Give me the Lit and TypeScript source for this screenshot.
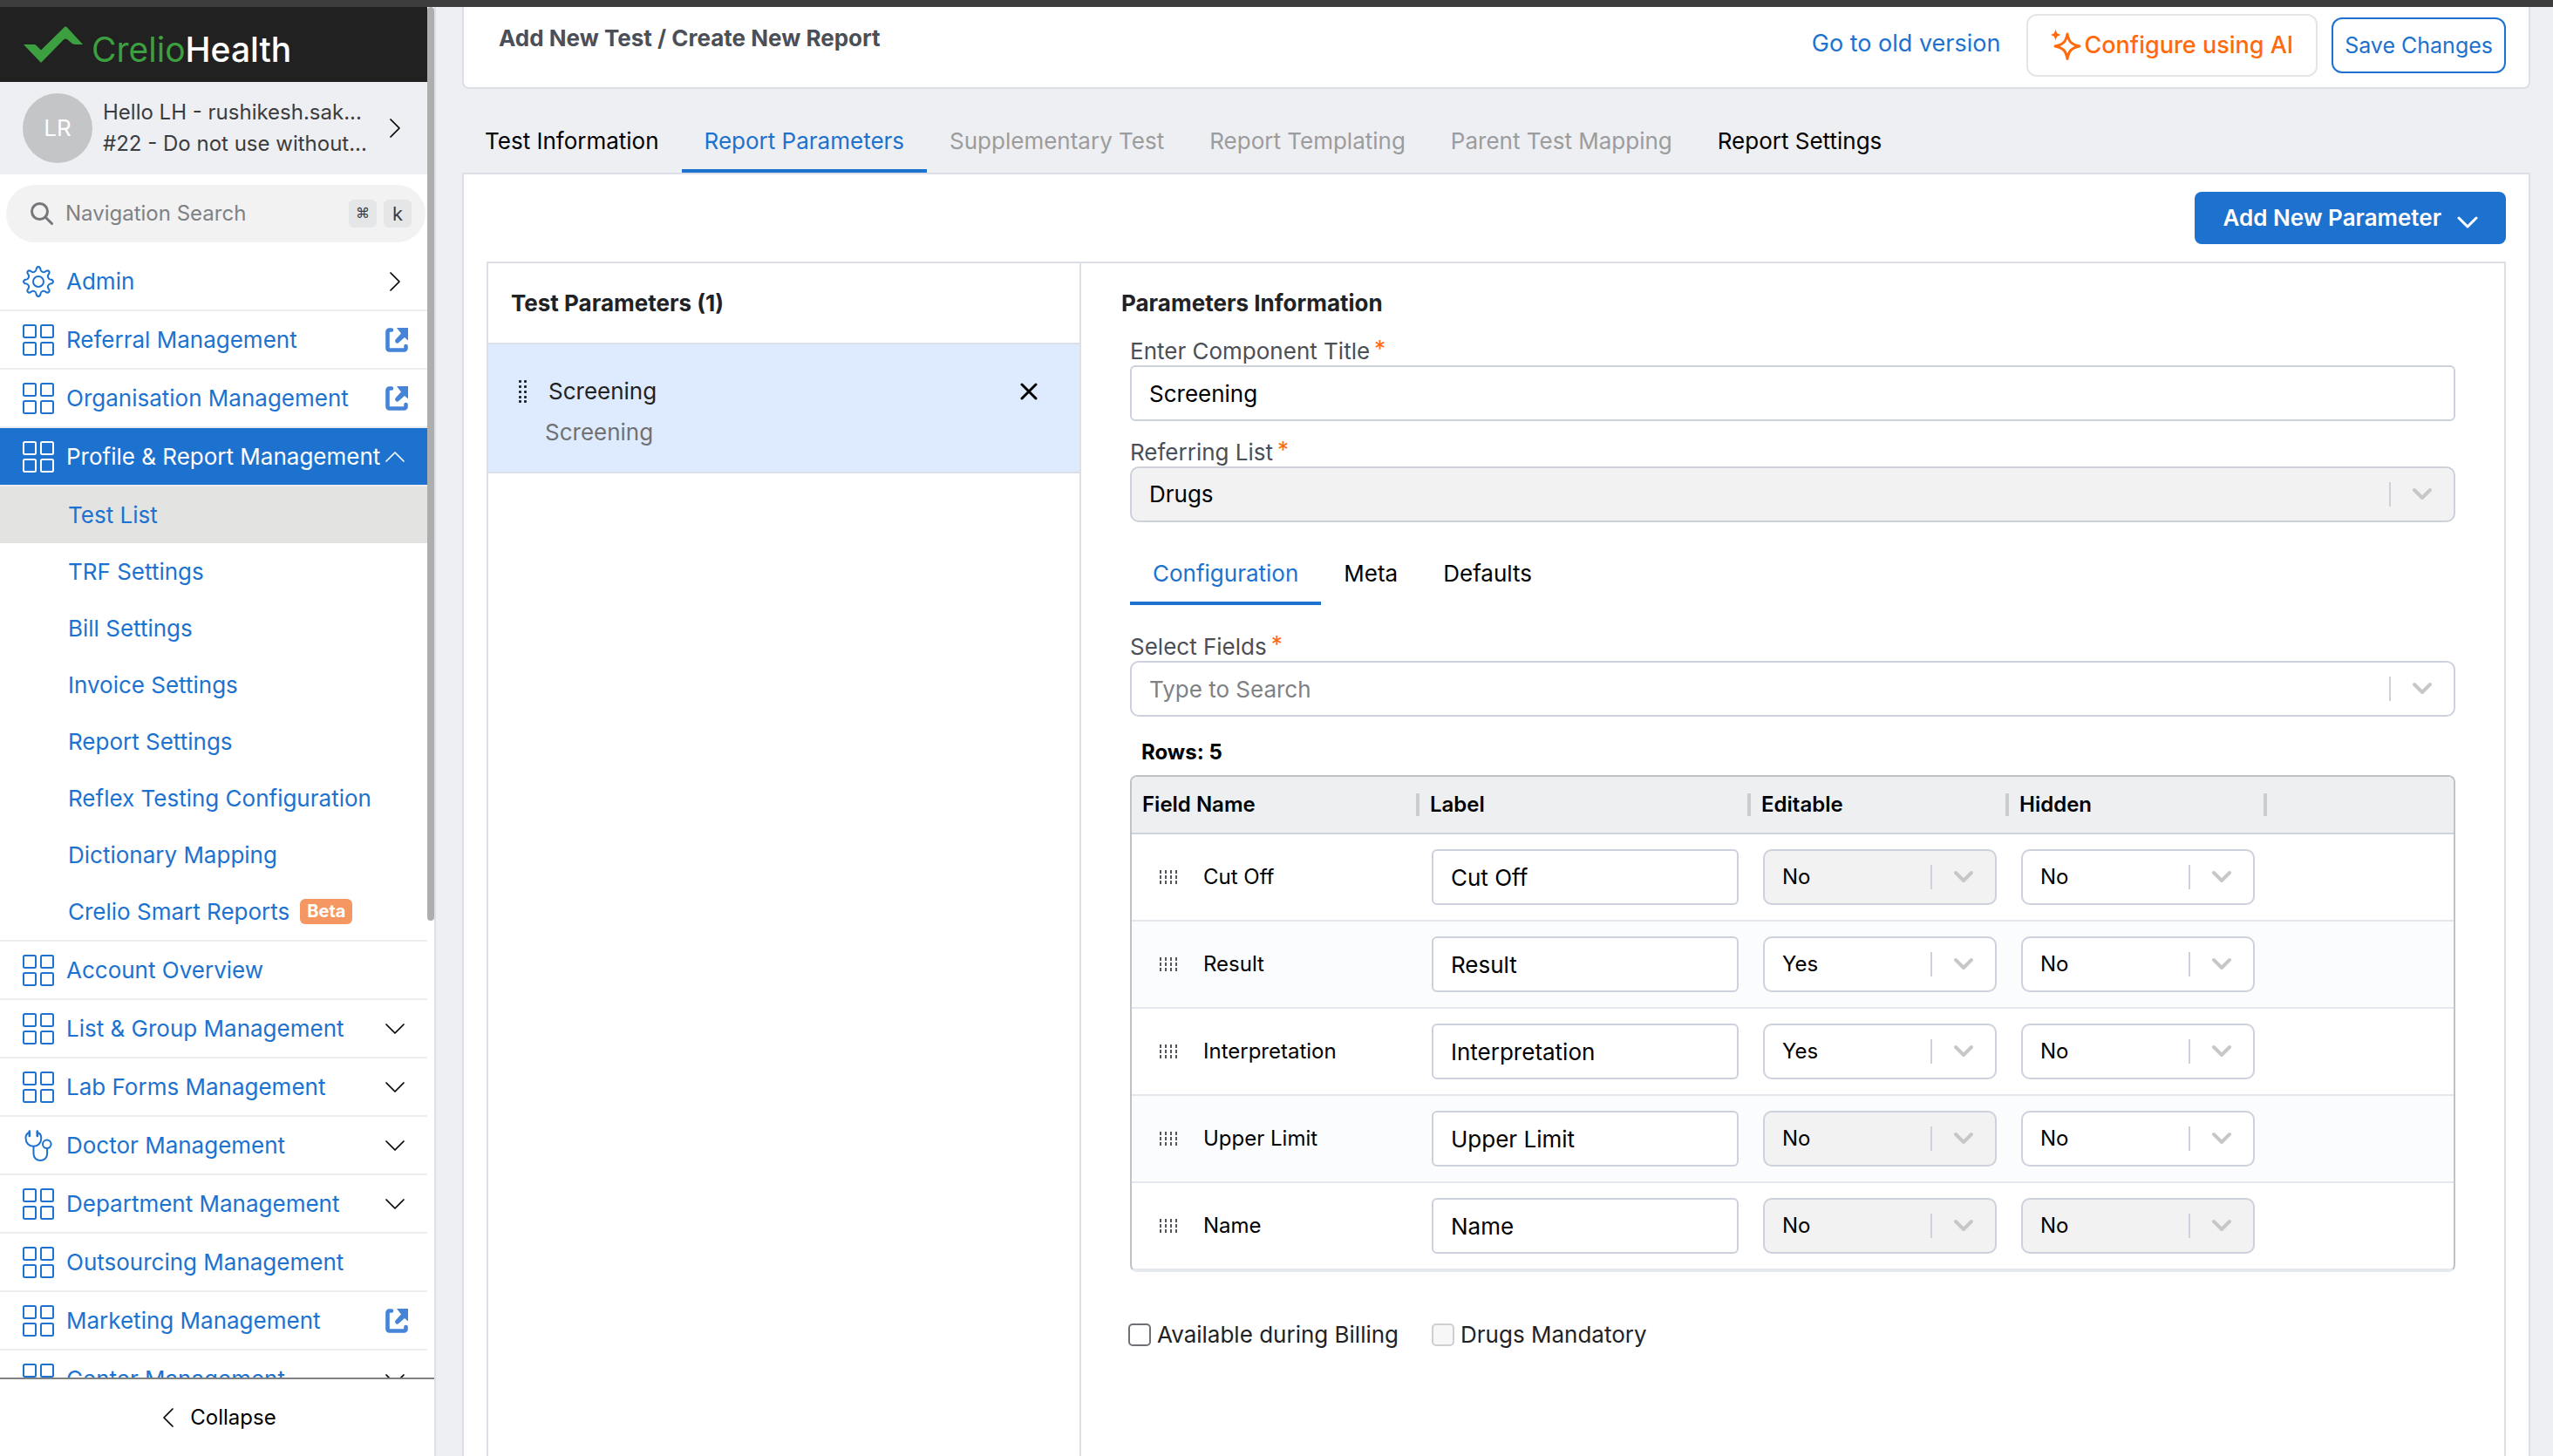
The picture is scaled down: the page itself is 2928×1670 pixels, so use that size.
import { LitElement, html, svg, css, nothing, TemplateResult } from "lit";
import { customElement, state } from "lit/decorators.js";
import { classMap } from "lit/directives/class-map.js";

/* ---------- icons ---------- */

const gridIcon = () => html`<svg class="icon" viewBox="0 0 36 36" fill="none" stroke="currentColor" stroke-width="2" aria-hidden="true">
  <rect x="1" y="1" width="14" height="14" rx="1.5" /><rect x="21" y="1" width="14" height="14" rx="1.5" />
  <rect x="1" y="21" width="14" height="14" rx="1.5" /><rect x="21" y="21" width="14" height="14" rx="1.5" />
</svg>`;

/* Eight rounded teeth, built from a radius that swings between rim and valley. */
const gearOutline = (() => {
  const parts: string[] = [];
  const point = (radius: number, degrees: number) => {
    const a = ((degrees - 90) * Math.PI) / 180;
    return `${(18 + radius * Math.cos(a)).toFixed(2)} ${(18 + radius * Math.sin(a)).toFixed(2)}`;
  };
  for (let i = 0; i < 8; i++) {
    const c = i * 45;
    parts.push(`${i === 0 ? "M" : "L"}${point(13.6, c - 11)}`);
    parts.push(`C${point(15.5, c - 9)} ${point(17, c - 7)} ${point(17, c)}`);
    parts.push(`C${point(17, c + 7)} ${point(15.5, c + 9)} ${point(13.6, c + 11)}`);
    parts.push(`C${point(11.8, c + 15)} ${point(11.8, c + 30)} ${point(13.6, c + 34)}`);
  }
  return parts.join("") + "Z";
})();

const gearIcon = () => html`<svg class="icon" viewBox="0 0 36 36" fill="none" stroke="currentColor" stroke-width="2" stroke-linejoin="round" aria-hidden="true">
  <path d=${gearOutline} /><circle cx="18" cy="18" r="6" />
</svg>`;

const doctorIcon = () => html`<svg class="icon" viewBox="0 0 36 36" fill="none" stroke="currentColor" stroke-width="2" stroke-linecap="round" aria-hidden="true">
  <path d="M7.5 3C4.5 4 3.5 6 3.5 9.500C3.500 15 7.500 18.800 12.400 18.800S21.300 15 21.300 9.500C21.300 6 20.300 4 17 3" />
  <path d="M7.800 1.500v5.500M16.800 1.500v5.500" stroke-width="2.600" />
  <path d="M12.500 19v8.500c0 4.500 3.500 7.500 7.800 7.500s7.800-3 7.800-7.500v-6" />
  <circle cx="27.800" cy="16.300" r="4.800" />
</svg>`;

const chevron = (dir: "right" | "left" | "up" | "down") => {
  const d = {
    right: "M7 2l10 10-10 10",
    left: "M17 2L7 12l10 10",
    up: "M2 17L12 7l10 10",
    down: "M2 7l10 10L22 7",
  }[dir];
  return html`<svg class="chevron" viewBox="0 0 24 24" fill="none" stroke="currentColor" stroke-width="1.7" stroke-linecap="round" stroke-linejoin="round" aria-hidden="true">
    <path d=${d} />
  </svg>`;
};

const externalIcon = () => html`<svg class="external" viewBox="0 0 26 28" aria-hidden="true">
  <path d="M7 2.500H4.500a2 2 0 0 0-2 2v19a2 2 0 0 0 2 2h17a2 2 0 0 0 2-2V21" fill="none" stroke="currentColor" stroke-width="4.600" stroke-linecap="round" />
  <path d="M13 0H26V14.500L22 11L15.500 16.800A2.200 2.200 0 0 1 11.800 13.300L18 6.500Z" fill="currentColor" />
</svg>`;

const gripDots = () => html`<svg class="grip-dots" viewBox="0 0 10 26" fill="currentColor" aria-hidden="true">
  ${[0, 6, 12, 18, 23].map((y) => svg`<rect x="0" y=${y} width="3" height="3" rx="1" /><rect x="6" y=${y} width="3" height="3" rx="1" />`)}
</svg>`;

const gripDashes = () => html`<svg class="grip-dashes" viewBox="0 0 20 16" fill="currentColor" aria-hidden="true">
  ${[0, 6, 12].map((y) => [0, 6, 12, 18].map((x) => svg`<rect x=${x} y=${y} width="2" height="4" />`))}
</svg>`;

const selectArrow = () => html`<svg class="select-arrow" viewBox="0 0 24 16" fill="none" stroke="currentColor" stroke-width="4" stroke-linecap="round" stroke-linejoin="round" aria-hidden="true">
  <path d="M3 3l9 9 9-9" />
</svg>`;

/* ---------- sidebar ---------- */

interface NavItem {
  label: string;
  icon?: "grid" | "gear" | "doctor";
  end?: "right" | "up" | "down" | "external";
  children?: { label: string; badge?: string; current?: boolean }[];
}

const NAV: NavItem[] = [
  { label: "Admin", icon: "gear", end: "right" },
  { label: "Referral Management", end: "external" },
  { label: "Organisation Management", end: "external" },
  {
    label: "Profile & Report Management",
    end: "up",
    children: [
      { label: "Test List", current: true },
      { label: "TRF Settings" },
      { label: "Bill Settings" },
      { label: "Invoice Settings" },
      { label: "Report Settings" },
      { label: "Reflex Testing Configuration" },
      { label: "Dictionary Mapping" },
      { label: "Crelio Smart Reports", badge: "Beta" },
    ],
  },
  { label: "Account Overview" },
  { label: "List & Group Management", end: "down" },
  { label: "Lab Forms Management", end: "down" },
  { label: "Doctor Management", icon: "doctor", end: "down" },
  { label: "Department Management", end: "down" },
  { label: "Outsourcing Management" },
  { label: "Marketing Management", end: "external" },
  { label: "Center Management", end: "down" },
];

@customElement("side-nav")
export class SideNav extends LitElement {
  static styles = css`
    :host {
      display: grid;
      grid-template-rows: minmax(0, 1fr) auto;
      min-height: 0;
      box-sizing: border-box;
      background: #fff;
      border-right: 2px solid #dcdfe5;
      color: #1d72cf;
      font-size: 26px;
      line-height: 36px;
    }
    * { box-sizing: border-box; }
    a { color: inherit; text-decoration: none; }
    button { font: inherit; color: inherit; background: none; border: 0; padding: 0; text-align: left; cursor: pointer; }
    ul { list-style: none; margin: 0; padding: 0; }
    svg { display: block; flex: none; }

    .scroller { display: grid; grid-template-columns: minmax(0, 1fr) 8px; min-height: 0; overflow: hidden; }
    .content { min-height: 0; overflow: hidden; }
    .thumb { height: calc(100% * 2 / 3); background: #adaeae; border-radius: 4px; }

    .brand { display: flex; align-items: center; gap: 10px; height: 86px; padding: 0 27px; background: #212121; color: #fff; }
    .brand-mark { width: 68px; height: 42px; }
    .brand-name { font-size: 39px; line-height: 44px; font-weight: 500; padding-top: 12px; }
    .brand-name .lead { color: #3c9f40; font-weight: 400; }

    .account { display: flex; align-items: center; width: 100%; height: 106px; padding: 0 22px 0 26px; background: #eeeff2; color: #3b3c40; }
    .avatar { display: grid; place-items: center; flex: none; width: 80px; height: 80px; border-radius: 50%; background: #c4c5c7; color: #fff; }
    .account-text { flex: 1; padding-left: 12px; white-space: nowrap; font-size: 24px; }
    .account-line { display: block; }
    .account .chevron { color: #000; }

    .search { display: flex; align-items: center; gap: 14px; height: 66px; margin: 12px 2px 12px 7px; padding: 0 16px 0 28px; border-radius: 33px; background: #f2f2f2; font-size: 24px; }
    .search-icon { width: 26px; height: 26px; color: #76777a; }
    .search-input { flex: 1; min-width: 0; border: 0; background: none; padding: 0; font: inherit; color: #333; outline: 0; }
    .search-input::placeholder { color: #808184; opacity: 1; }
    .keys { display: flex; gap: 8px; }
    kbd { display: grid; place-items: center; width: 32px; height: 32px; border-radius: 6px; background: #e5e6e8; color: #3b3c40; font: inherit; font-size: 22px; line-height: 28px; }
    .cmd { font-family: "DejaVu Sans", sans-serif; font-size: 16px; }

    .row { display: flex; align-items: center; gap: 14px; width: 100%; height: 65px; padding: 0 22px 0 26px; white-space: nowrap; }
    .item { border-bottom: 2px solid #eeeeef; }
    .item.open { border-bottom: 0; }
    .item.open .row { background: #1d72cf; color: #fff; }
    .item.open .row .chevron { color: #fff; }
    .row-label { flex: 1; }
    .icon { width: 36px; height: 36px; }
    .chevron { width: 24px; height: 24px; color: #000; margin-right: 3px; }
    .open .chevron { margin-left: -14px; }
    .external { width: 26px; height: 28px; color: #4584d6; }

    .sub { border-top: 2px solid #eeeeef; border-bottom: 2px solid #eeeeef; }
    .sub-link { display: flex; align-items: center; gap: 12px; height: 65px; padding-left: 78px; white-space: nowrap; }
    .sub-link.current { background: #e3e3e2; }
    .badge { padding: 0 8px; border-radius: 6px; background: #f59762; color: #fff; font-size: 20px; line-height: 29px; font-weight: 700; }

    .collapse { display: flex; align-items: center; justify-content: center; gap: 10px; height: 90px; border-top: 2px solid #808183; color: #000; font-size: 24px; }
  `;

  private icon(kind: NavItem["icon"]) {
    if (kind === "gear") return gearIcon();
    if (kind === "doctor") return doctorIcon();
    return gridIcon();
  }

  private row(item: NavItem): TemplateResult {
    const inner = html`${this.icon(item.icon)}<span class="row-label">${item.label}</span>
      ${item.end === "external" ? externalIcon() : item.end ? chevron(item.end) : nothing}`;
    return item.end && item.end !== "external"
      ? html`<button class="row" type="button" aria-expanded=${item.end === "up"}>${inner}</button>`
      : html`<a class="row" href="#">${inner}</a>`;
  }

  render() {
    return html`
      <div class="scroller">
        <div class="content">
          <div class="brand">
            <svg class="brand-mark" viewBox="0 0 68 42" fill="#3c9f40" aria-hidden="true">
              <path d="M0 21H12C13 21 14 21.500 14.500 22L20 27.500L46.500 1.500Q48 -0.500 50 1.500L68 21H60C57 21 55.500 20 54 18.500L50.500 15.500Q48 13.500 46 15.500L20 42Z" />
            </svg>
            <span class="brand-name"><span class="lead">Crelio</span>Health</span>
          </div>
          <button class="account" type="button">
            <span class="avatar">LR</span>
            <span class="account-text">
              <span class="account-line">Hello LH - rushikesh.sak...</span>
              <span class="account-line">#22 - Do not use without...</span>
            </span>
            ${chevron("right")}
          </button>
          <div class="search">
            <svg class="search-icon" viewBox="0 0 26 26" fill="none" stroke="currentColor" stroke-width="3" stroke-linecap="round" aria-hidden="true">
              <circle cx="10.500" cy="10.500" r="9" /><path d="M17.500 17.500L24.500 24.500" />
            </svg>
            <input class="search-input" type="text" placeholder="Navigation Search" aria-label="Navigation Search" />
            <span class="keys"><kbd class="cmd">⌘</kbd><kbd>k</kbd></span>
          </div>
          <nav>
            <ul>
              ${NAV.map(
                (item) => html`<li class=${classMap({ item: true, open: !!item.children })}>
                  ${this.row(item)}
                  ${item.children
                    ? html`<ul class="sub">
                        ${item.children.map(
                          (child) => html`<li>
                            <a class=${classMap({ "sub-link": true, current: !!child.current })} href="#">
                              ${child.label}${child.badge ? html`<span class="badge">${child.badge}</span>` : nothing}
                            </a>
                          </li>`
                        )}
                      </ul>`
                    : nothing}
                </li>`
              )}
            </ul>
          </nav>
        </div>
        <div class="thumb"></div>
      </div>
      <button class="collapse" type="button">${chevron("left")}Collapse</button>
    `;
  }
}

/* ---------- page ---------- */

const TABS = [
  { label: "Test Information" },
  { label: "Report Parameters" },
  { label: "Supplementary Test", disabled: true },
  { label: "Report Templating", disabled: true },
  { label: "Parent Test Mapping", disabled: true },
  { label: "Report Settings" },
];

const SUB_TABS = ["Configuration", "Meta", "Defaults"];

interface FieldRow {
  name: string;
  editable: "Yes" | "No";
  editableLocked: boolean;
  hidden: "Yes" | "No";
  hiddenLocked: boolean;
}

const FIELDS: FieldRow[] = [
  { name: "Cut Off", editable: "No", editableLocked: true, hidden: "No", hiddenLocked: false },
  { name: "Result", editable: "Yes", editableLocked: false, hidden: "No", hiddenLocked: false },
  { name: "Interpretation", editable: "Yes", editableLocked: false, hidden: "No", hiddenLocked: false },
  { name: "Upper Limit", editable: "No", editableLocked: true, hidden: "No", hiddenLocked: false },
  { name: "Name", editable: "No", editableLocked: true, hidden: "No", hiddenLocked: true },
];

@customElement("app-root")
export class AppRoot extends LitElement {
  static styles = css`
    :host {
      display: grid;
      grid-template-rows: 8px minmax(0, 1fr);
      height: 100vh;
      overflow: hidden;
      background: #eeeff2;
      color: #000;
      font-family: Inter, "Liberation Sans", sans-serif;
      font-size: 26px;
      line-height: 32px;
    }
    * { box-sizing: border-box; }
    a { color: inherit; text-decoration: none; }
    button { font: inherit; color: inherit; background: none; border: 0; padding: 0; cursor: pointer; white-space: nowrap; }
    h1, h2 { margin: 0; font-size: 26px; line-height: 36px; font-weight: 700; }
    svg { display: block; flex: none; }

    .top-strip { background: #3d3d3d; }
    .shell { display: grid; grid-template-columns: 500px minmax(0, 1fr); min-height: 0; }
    .main { display: flex; flex-direction: column; min-height: 0; padding: 0 26px 0 30px; overflow: hidden; }

    .page-head { display: flex; align-items: center; justify-content: space-between; flex: none; padding: 8px 26px 12px 40px; background: #fff; border: 2px solid #dcdfe5; border-top: 0; border-radius: 0 0 8px 8px; }
    .page-title { align-self: flex-start; padding-top: 10px; color: #4b4f57; }
    .actions { display: flex; align-items: center; gap: 16px; }
    .old-link { margin-right: 14px; padding-bottom: 4px; color: #1d72cf; font-size: 27px; }
    .ai-button { display: flex; align-items: center; gap: 2px; height: 72px; padding: 0 26px; border: 2px solid #e5e5e6; border-radius: 12px; color: #ff6a0d; font-size: 27px; font-weight: 500; }
    .spark { width: 36px; height: 36px; }
    .save-button { height: 64px; padding: 0 13px; border: 2px solid #1d72cf; border-radius: 12px; color: #1d72cf; font-size: 25px; }

    .tabs { display: flex; flex: none; margin-top: 28px; }
    .tab { padding: 16px 26px; border-bottom: 4px solid transparent; }
    .tab.active { color: #1d72cf; border-bottom-color: #1d72cf; }
    .tab:disabled { color: #9b9c9e; cursor: default; }

    .card { display: flex; flex-direction: column; flex: 1; min-height: 0; padding: 20px 26px 0; background: #fff; border: 2px solid #dcdfe5; border-bottom: 0; }
    .add-button { display: flex; align-items: center; align-self: flex-end; gap: 18px; height: 60px; margin-bottom: 20px; padding: 0 32px; border-radius: 8px; background: #1d72cf; color: #fff; font-weight: 600; }
    .add-button .chevron { width: 24px; height: 24px; margin-top: 10px; stroke-width: 3; }

    .panel { display: grid; grid-template-columns: minmax(0, 5fr) minmax(0, 12fr); flex: 1; min-height: 0; border: 2px solid #dcdfe5; border-bottom: 0; }
    .list { border-right: 2px solid #dcdfe5; color: #212225; }
    .list-title { display: flex; align-items: center; height: 93px; padding: 0 26px; border-bottom: 2px solid #dcdfe5; }
    .param { display: grid; grid-template-columns: auto minmax(0, 1fr) auto; align-items: center; row-gap: 11px; height: 148px; padding: 36px 48px 27px 35px; background: #deebfe; border-bottom: 2px solid #dcdfe5; line-height: 36px; }
    .grip-dots { width: 10px; height: 26px; }
    .param-name { padding-left: 24px; }
    .param-sub { grid-column: 1 / -1; padding-left: 30px; color: #707174; }
    .close { color: #000; }
    .close-icon { width: 20px; height: 20px; }

    .detail { padding: 28px 56px 0 46px; }
    .detail-title { color: #212225; }
    .form { padding: 21px 0 0 10px; }
    .field { margin-bottom: 20px; }
    .label { display: flex; gap: 5px; color: #4b4f57; }
    .req { color: #ff6a0d; line-height: 26px; }
    .text-input { display: block; width: 100%; height: 64px; padding: 0 20px; border: 2px solid #ccd1dc; border-radius: 6px; background: #fff; color: #000; font: inherit; outline: 0; }
    .text-input::placeholder { color: #808184; opacity: 1; }
    .select { position: relative; }
    .control { appearance: none; display: block; width: 100%; height: 64px; margin: 0; padding: 0 80px 0 20px; border: 2px solid #ccd1dc; border-radius: 10px; background: #fff; color: #000; font: inherit; opacity: 1; outline: 0; }
    .control::placeholder { color: #808184; opacity: 1; }
    .control:disabled { background: #f2f2f2; }
    .indicator { position: absolute; top: 18px; right: 26px; display: flex; align-items: center; height: 28px; padding-left: 24px; border-left: 2px solid #ccd1dc; color: #c6c7c9; pointer-events: none; }
    .select-arrow { width: 24px; height: 16px; }

    .sub-tabs { display: flex; margin: 27px 0 32px; }

    .row-count { padding: 5px 13px 10px; font-size: 24px; font-weight: 700; }
    .table-wrap { border: 2px solid #c0c2c6; border-bottom-color: #e4e7ec; border-radius: 8px; overflow: hidden; }
    .table { width: 100%; border-collapse: separate; border-spacing: 0; table-layout: fixed; font-size: 24px; }
    .col-name { width: 330px; }
    .col-label { width: 380px; }
    .col-flag { width: 296px; }
    .table th { height: 66px; padding: 0; background: #eeeff1; border-bottom: 2px solid #cdd3dc; text-align: left; font-weight: 600; }
    .head { display: block; padding-left: 12px; border-right: 4px solid #cbccce; line-height: 26px; }
    .table td { height: 100px; padding: 0 14px; border-bottom: 2px solid #e4e7ee; }
    .table tbody tr:nth-child(even) { background: #fbfcfe; }
    .table .text-input { font-size: 26px; }
    .name-cell { display: flex; align-items: center; gap: 30px; padding-left: 18px; }
    .grip-dashes { width: 20px; height: 16px; color: #55565a; }

    .checks { display: flex; gap: 38px; margin-top: 56px; margin-left: -2px; color: #212225; }
    .check { display: flex; align-items: center; gap: 7px; }
    .box { appearance: none; width: 26px; height: 26px; margin: 0; border: 2px solid #6f7177; border-radius: 5px; background: #fff; }
    .box:disabled { border-color: #cfcfd1; background: #f7f7f7; }
  `;

  @state() private activeTab = "Report Parameters";
  @state() private activeSubTab = "Configuration";

  private indicator() {
    return html`<span class="indicator">${selectArrow()}</span>`;
  }

  private flagSelect(label: string, value: string, locked: boolean) {
    return html`<div class="select">
      <select class="control" aria-label=${label} ?disabled=${locked}>
        ${["Yes", "No"].map((option) => html`<option ?selected=${option === value}>${option}</option>`)}
      </select>
      ${this.indicator()}
    </div>`;
  }

  private label(text: string, target: string) {
    return html`<label class="label" for=${target}>${text}<span class="req">*</span></label>`;
  }

  private table() {
    return html`<div class="table-wrap">
      <table class="table">
        <colgroup>
          <col class="col-name" /><col class="col-label" /><col class="col-flag" /><col class="col-flag" /><col />
        </colgroup>
        <thead>
          <tr>
            ${["Field Name", "Label", "Editable", "Hidden"].map((h) => html`<th scope="col"><span class="head">${h}</span></th>`)}
            <th></th>
          </tr>
        </thead>
        <tbody>
          ${FIELDS.map(
            (f) => html`<tr>
              <td><span class="name-cell">${gripDashes()}${f.name}</span></td>
              <td><input class="text-input" type="text" aria-label="Label for ${f.name}" .value=${f.name} /></td>
              <td>${this.flagSelect(`${f.name} editable`, f.editable, f.editableLocked)}</td>
              <td>${this.flagSelect(`${f.name} hidden`, f.hidden, f.hiddenLocked)}</td>
              <td></td>
            </tr>`
          )}
        </tbody>
      </table>
    </div>`;
  }

  render() {
    return html`
      <div class="top-strip"></div>
      <div class="shell">
        <side-nav></side-nav>
        <main class="main">
          <header class="page-head">
            <h1 class="page-title">Add New Test / Create New Report</h1>
            <div class="actions">
              <a class="old-link" href="#">Go to old version</a>
              <button class="ai-button" type="button">
                <svg class="spark" viewBox="0 0 36 36" aria-hidden="true">
                  <path d="M19 5C20.500 13.500 23.500 17 33 19C23.500 21 20.500 24.500 19 33.500C17.500 24.500 14.500 21 5 19C14.500 17 17.500 13.500 19 5Z" fill="none" stroke="currentColor" stroke-width="3" stroke-linejoin="round" />
                  <path d="M5.500 0L7.200 4.200L11.500 6L7.200 7.800L5.500 12L3.800 7.800L0 6L3.800 4.200Z" fill="currentColor" />
                </svg>
                Configure using AI
              </button>
              <button class="save-button" type="button">Save Changes</button>
            </div>
          </header>

          <div class="tabs" role="tablist">
            ${TABS.map(
              (t) => html`<button
                class=${classMap({ tab: true, active: t.label === this.activeTab })}
                type="button"
                role="tab"
                aria-selected=${t.label === this.activeTab}
                ?disabled=${t.disabled}
                @click=${() => (this.activeTab = t.label)}
              >${t.label}</button>`
            )}
          </div>

          <section class="card">
            <button class="add-button" type="button">Add New Parameter ${chevron("down")}</button>
            <div class="panel">
              <div class="list">
                <h2 class="list-title">Test Parameters (1)</h2>
                <div class="param">
                  ${gripDots()}
                  <span class="param-name">Screening</span>
                  <button class="close" type="button" aria-label="Remove Screening">
                    <svg class="close-icon" viewBox="0 0 20 20" fill="none" stroke="currentColor" stroke-width="3" stroke-linecap="round" aria-hidden="true">
                      <path d="M2 2l16 16M18 2L2 18" />
                    </svg>
                  </button>
                  <span class="param-sub">Screening</span>
                </div>
              </div>

              <div class="detail">
                <h2 class="detail-title">Parameters Information</h2>
                <div class="form">
                  <div class="field">
                    ${this.label("Enter Component Title", "title")}
                    <input class="text-input" id="title" type="text" .value=${"Screening"} />
                  </div>
                  <div class="field">
                    ${this.label("Referring List", "referring")}
                    <div class="select">
                      <select class="control" id="referring" disabled><option>Drugs</option></select>
                      ${this.indicator()}
                    </div>
                  </div>
                  <div class="sub-tabs" role="tablist">
                    ${SUB_TABS.map(
                      (t) => html`<button
                        class=${classMap({ tab: true, active: t === this.activeSubTab })}
                        type="button"
                        role="tab"
                        aria-selected=${t === this.activeSubTab}
                        @click=${() => (this.activeSubTab = t)}
                      >${t}</button>`
                    )}
                  </div>
                  <div class="field">
                    ${this.label("Select Fields", "fields")}
                    <div class="select">
                      <input class="control" id="fields" type="text" role="combobox" aria-expanded="false" placeholder="Type to Search" />
                      ${this.indicator()}
                    </div>
                  </div>
                  <div class="row-count">Rows: 5</div>
                  ${this.table()}
                  <div class="checks">
                    <label class="check"><input class="box" type="checkbox" />Available during Billing</label>
                    <label class="check"><input class="box" type="checkbox" disabled />Drugs Mandatory</label>
                  </div>
                </div>
              </div>
            </div>
          </section>
        </main>
      </div>
    `;
  }
}
